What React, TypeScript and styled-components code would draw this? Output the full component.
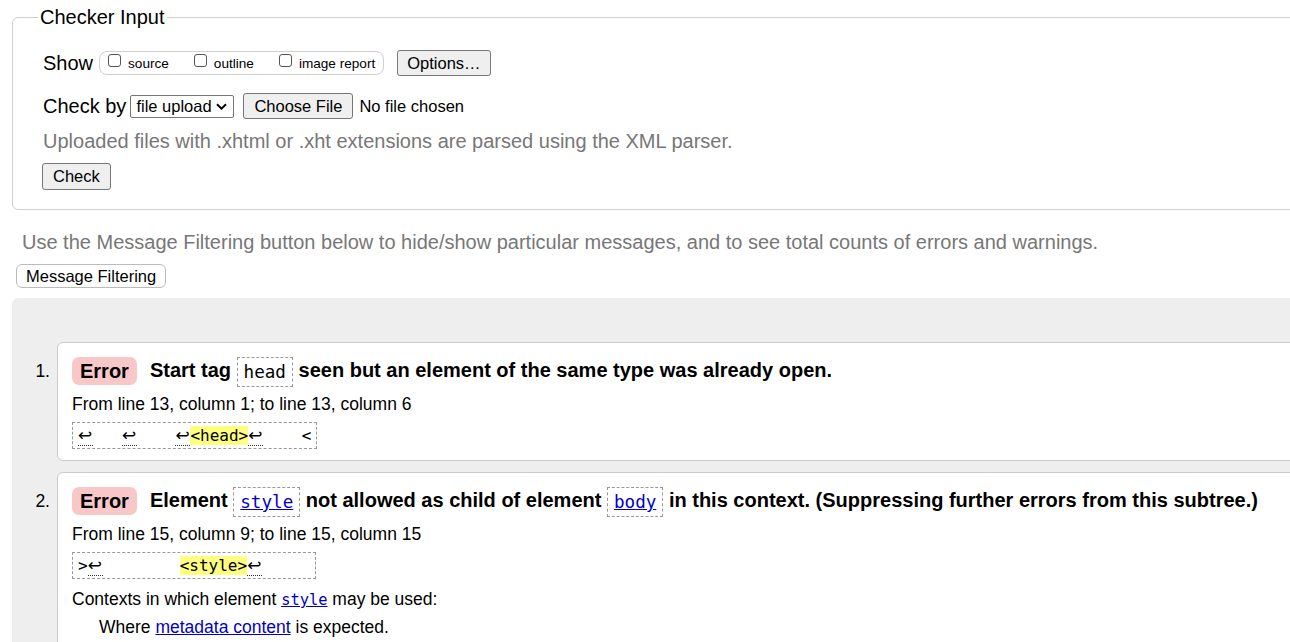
import React from "react";
import styled, { createGlobalStyle } from "styled-components";

const GlobalStyle = createGlobalStyle`
  html, body { margin: 0; padding: 0; background: #fff; overflow: hidden; }
  body { font-family: "Liberation Sans", Arial, sans-serif; color: #000; }
`;

const Page = styled.div`
  width: 1340px;
  padding: 6px 0 0 12px;
`;

const Fieldset = styled.fieldset`
  margin: 0;
  padding: 0 0 19px 30px;
  border: 1px solid #cfcfcf;
  border-radius: 6px;
`;

const Legend = styled.legend`
  font-size: 20px;
  line-height: 22px;
  padding: 0 2px;
  margin-left: -5px;
`;

const Form = styled.div`
  display: flex;
  flex-direction: column;
  align-items: flex-start;
`;

const Row = styled.div<{ $top: number }>`
  display: flex;
  align-items: center;
  height: 26px;
  margin-top: ${(p) => p.$top}px;
`;

const RowLabel = styled.span<{ $gap: number }>`
  font-size: 20px;
  margin-right: ${(p) => p.$gap}px;
`;

const CheckGroup = styled.div`
  display: flex;
  align-items: center;
  height: 22px;
  border: 1px solid #d0d0d0;
  border-radius: 8px;
  padding: 0 8px;
  margin-right: 13px;
`;

const CheckOption = styled.label`
  display: flex;
  align-items: center;
  gap: 7px;
  font-size: 13.6px;
  margin-right: 25px;
  &:last-child { margin-right: 0; }
`;

const Box = styled.input`
  appearance: none;
  width: 13px;
  height: 13px;
  margin: 0 0 6px 0;
  border: 1px solid #555;
  border-radius: 3px;
  background: #fff;
`;

const NativeButton = styled.button<{ $h?: number; $pad?: number }>`
  height: ${(p) => p.$h ?? 26}px;
  padding: 0 ${(p) => p.$pad ?? 10}px;
  font-family: "Liberation Sans", Arial, sans-serif;
  font-size: 16.5px;
  color: #000;
  background: #efefef;
  border: 1px solid #767676;
  border-radius: 3px;
`;

const SelectBox = styled.div`
  display: flex;
  align-items: center;
  justify-content: space-between;
  width: 104px;
  height: 23px;
  box-sizing: border-box;
  padding: 0 6px 0 5px;
  border: 1px solid #767676;
  border-radius: 2px;
  background: #fff;
  font-size: 16.5px;
  margin-right: 9px;
`;

const FileName = styled.span`
  font-size: 16.5px;
  margin-left: 6px;
`;

const Hint = styled.div<{ $top: number; $left?: number }>`
  font-size: 20px;
  line-height: 24px;
  color: #777;
  margin-top: ${(p) => p.$top}px;
  margin-left: ${(p) => p.$left ?? 0}px;
`;

const CheckButton = styled(NativeButton)`
  margin-top: 10px;
  margin-left: -1px;
`;

const FilterButton = styled.button`
  display: block;
  margin: 10px 0 0 4px;
  height: 24px;
  padding: 0 9px;
  font-family: "Liberation Sans", Arial, sans-serif;
  font-size: 16.5px;
  color: #000;
  background: #fff;
  border: 1px solid #bbb;
  border-radius: 6px;
`;

const Results = styled.div`
  margin-top: 10px;
  background: #eee;
  border-radius: 6px 0 0 0;
  padding: 44px 0 20px 0;
`;

const List = styled.ol`
  list-style: none;
  margin: 0;
  padding: 0;
`;

const Item = styled.li`
  display: flex;
  margin-bottom: 11px;
`;

const Num = styled.span`
  width: 45px;
  box-sizing: border-box;
  text-align: right;
  padding: 14px 7px 0 0;
  font-size: 17.5px;
  line-height: 30px;
`;

const Card = styled.div`
  flex: 1;
  background: #fff;
  border: 1px solid #ccc;
  border-radius: 6px;
  padding: 13px 15px 11px 14px;
`;

const Title = styled.div`
  display: flex;
  align-items: center;
  gap: 13px;
  height: 30px;
`;

const Badge = styled.span`
  display: inline-flex;
  align-items: center;
  height: 28px;
  padding: 0 8px;
  border-radius: 7px;
  background: #f8c8c8;
  font-size: 20px;
  font-weight: bold;
`;

const TitleText = styled.span`
  font-size: 20px;
  font-weight: bold;
  line-height: 30px;
  white-space: nowrap;
`;

const Code = styled.code<{ $boxed?: boolean }>`
  font-family: "DejaVu Sans Mono", "Liberation Mono", monospace;
  font-size: 0.88em;
  font-weight: normal;
  ${(p) =>
    p.$boxed
      ? `display: inline-block; line-height: 28px; padding: 0 6px; border: 1px dashed #999; vertical-align: middle; background: #fff;`
      : ""}
`;

const Link = styled.a`
  color: #0000cc;
  text-decoration: underline;
`;

const Line = styled.div<{ $top: number; $indent?: number }>`
  font-size: 17.5px;
  line-height: 24px;
  margin-top: ${(p) => p.$top}px;
  padding-left: ${(p) => p.$indent ?? 0}px;
`;

const Extract = styled.div`
  display: inline-block;
  margin-top: 6px;
  padding: 0 5px;
  border: 1px dashed #999;
  font-family: "DejaVu Sans Mono", "Liberation Mono", monospace;
  font-size: 16px;
  line-height: 25px;
  height: 25px;
  white-space: pre;
  vertical-align: top;
`;

const Nl = styled.b`
  display: inline-block;
  width: 15px;
  font-family: "DejaVu Sans", sans-serif;
  font-size: 17px;
  font-weight: normal;
  line-height: 19px;
  border-bottom: 1px dotted #333;
`;

const Mark = styled.span`
  background: #ffff80;
`;

const Chevron = () => (
  <svg width="11" height="7" viewBox="0 0 11 7" aria-hidden>
    <path d="M1 1.2 L5.5 5.6 L10 1.2" fill="none" stroke="#000" strokeWidth="2" />
  </svg>
);

export default function App() {
  return (
    <Page>
      <GlobalStyle />
      <Fieldset>
        <Legend>Checker Input</Legend>
        <Form>
          <Row $top={22}>
            <RowLabel $gap={6}>Show</RowLabel>
            <CheckGroup>
              <CheckOption>
                <Box type="checkbox" />
                source
              </CheckOption>
              <CheckOption>
                <Box type="checkbox" />
                outline
              </CheckOption>
              <CheckOption>
                <Box type="checkbox" />
                image report
              </CheckOption>
            </CheckGroup>
            <NativeButton $pad={9}>Options…</NativeButton>
          </Row>
          <Row $top={17}>
            <RowLabel $gap={4}>Check by</RowLabel>
            <SelectBox>
              <span>file upload</span>
              <Chevron />
            </SelectBox>
            <NativeButton>Choose File</NativeButton>
            <FileName>No file chosen</FileName>
          </Row>
          <Hint $top={10}>Uploaded files with .xhtml or .xht extensions are parsed using the XML parser.</Hint>
          <CheckButton $h={27}>Check</CheckButton>
        </Form>
      </Fieldset>

      <Hint $top={20} $left={10}>
        Use the Message Filtering button below to hide/show particular messages, and to see total counts of errors and warnings.
      </Hint>
      <FilterButton>Message Filtering</FilterButton>

      <Results>
        <List>
          <Item>
            <Num>1.</Num>
            <Card>
              <Title>
                <Badge>Error</Badge>
                <TitleText>
                  Start tag <Code $boxed>head</Code> seen but an element of the same type was already open.
                </TitleText>
              </Title>
              <Line $top={6}>From line 13, column 1; to line 13, column 6</Line>
              <Extract>
                <Nl>↩</Nl>{"   "}<Nl>↩</Nl>{"    "}<Nl>↩</Nl><Mark>&lt;head&gt;</Mark><Nl>↩</Nl>{"    <"}
              </Extract>
            </Card>
          </Item>
          <Item>
            <Num>2.</Num>
            <Card>
              <Title>
                <Badge>Error</Badge>
                <TitleText>
                  Element <Code $boxed><Link href="#">style</Link></Code> not allowed as child of element{" "}
                  <Code $boxed><Link href="#">body</Link></Code> in this context. (Suppressing further errors from this subtree.)
                </TitleText>
              </Title>
              <Line $top={6}>From line 15, column 9; to line 15, column 15</Line>
              <Extract>
                {">"}<Nl>↩</Nl>{"        "}<Mark>&lt;style&gt;</Mark><Nl>↩</Nl>{"     "}
              </Extract>
              <Line $top={8}>
                Contexts in which element <Code><Link href="#">style</Link></Code> may be used:
              </Line>
              <Line $top={3} $indent={27}>
                Where <Link href="#">metadata content</Link> is expected.
              </Line>
            </Card>
          </Item>
        </List>
      </Results>
    </Page>
  );
}
